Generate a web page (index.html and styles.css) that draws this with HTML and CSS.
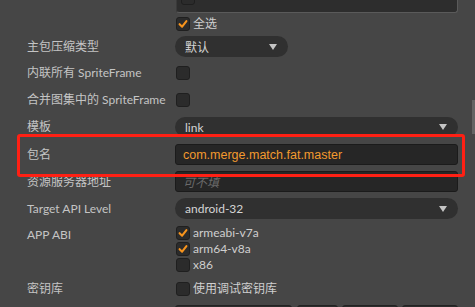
FILE: index.html
```html
<!DOCTYPE html>
<html lang="zh">
<head>
<meta charset="utf-8">
<title>构建发布</title>
<link rel="stylesheet" href="styles.css">
</head>
<body>
<div class="panel">
  <div class="form">
    <div class="lbl"></div>
    <div class="listbox">
      <span class="cb"></span>
      <span class="list-text">db://assets/Scene/Main.fire</span>
    </div>

    <div class="lbl"></div>
    <label class="check">
      <span class="cb"><svg viewBox="0 0 14 14"><polyline points="3,7.2 6,10.2 11,3.6"/></svg></span>
      <span>全选</span>
    </label>

    <div class="lbl">主包压缩类型</div>
    <div class="select select-short"><span>默认</span><svg class="arrow" viewBox="0 0 8 7"><polygon points="0,0 8,0 4,6"/></svg></div>

    <div class="lbl">内联所有 SpriteFrame</div>
    <label class="check"><span class="cb"></span></label>

    <div class="lbl">合并图集中的 SpriteFrame</div>
    <label class="check"><span class="cb"></span></label>

    <div class="lbl">模板</div>
    <div class="select select-thin"><span>link</span><svg class="arrow" viewBox="0 0 8 7"><polygon points="0,0 8,0 4,6"/></svg></div>

    <div class="lbl">包名</div>
    <div class="input"><span class="value">com.merge.match.fat.master</span></div>

    <div class="lbl">资源服务器地址</div>
    <div class="input"><span class="placeholder">可不填</span></div>

    <div class="lbl">Target API Level</div>
    <div class="select"><span>android-32</span><svg class="arrow" viewBox="0 0 8 7"><polygon points="0,0 8,0 4,6"/></svg></div>

    <div class="lbl lbl-top">APP ABI</div>
    <div class="checklist">
      <label class="check">
        <span class="cb"><svg viewBox="0 0 14 14"><polyline points="3,7.2 6,10.2 11,3.6"/></svg></span>
        <span>armeabi-v7a</span>
      </label>
      <label class="check">
        <span class="cb"><svg viewBox="0 0 14 14"><polyline points="3,7.2 6,10.2 11,3.6"/></svg></span>
        <span>arm64-v8a</span>
      </label>
      <label class="check">
        <span class="cb"></span>
        <span>x86</span>
      </label>
    </div>

    <div class="lbl">密钥库</div>
    <label class="check">
      <span class="cb"></span>
      <span>使用调试密钥库</span>
    </label>

    <div class="lbl"></div>
    <div class="btnrow">
      <span class="btn btn-a"></span>
      <span class="btn btn-b"></span>
      <span class="btn btn-c"></span>
      <span class="btn btn-c"></span>
    </div>
  </div>
  <div class="highlight"></div>
  <div class="scroll-thumb"></div>
</div>
</body>
</html>
```

FILE: styles.css
```css
* { box-sizing: border-box; }

html, body {
  margin: 0;
  padding: 0;
  background: #464646;
  overflow: hidden;
}

body {
  width: 475px;
  height: 307px;
  font-family: "Lato", "Noto Sans CJK SC", sans-serif;
  font-size: 12px;
  color: #c6c6c6;
}

.panel {
  position: relative;
  width: 475px;
  height: 307px;
  overflow: hidden;
}

.form {
  display: grid;
  grid-template-columns: 148px 283px;
  grid-template-rows: 24px 22px 23px 30px 24px 30px 25px 29px 25px 55px 26px 24px;
  margin-top: -11px;
  padding-left: 27px;
}

.lbl {
  align-self: center;
  line-height: 16px;
  color: #c4c4c4;
  white-space: nowrap;
}

.lbl-top {
  align-self: start;
  margin-top: 5px;
  line-height: 18px;
}

.listbox {
  margin-left: 1px;
  width: 282px;
  height: 24px;
  background: #2d2d2d;
  border: 1px solid #5a5a5a;
  border-top: none;
  border-left-color: #3a3a3a;
  border-radius: 0 0 3px 3px;
  display: flex;
  align-items: flex-end;
  gap: 5px;
  padding: 0 0 7px 4px;
}

.list-text {
  color: #8a8a8a;
  line-height: 12px;
  margin-bottom: 3px;
}

.check {
  display: flex;
  align-items: center;
  gap: 3px;
  margin-left: 1px;
  align-self: center;
  justify-self: start;
  color: #cfcfcf;
  line-height: 14px;
}

.checklist .check {
  align-self: flex-start;
}

.cb {
  flex: none;
  width: 14px;
  height: 14px;
  background: #2b2b2b;
  border: 1px solid #1f1f1f;
  border-radius: 3px;
  display: inline-flex;
}

.cb svg {
  width: 12px;
  height: 12px;
}

.cb polyline {
  fill: none;
  stroke: #f7941d;
  stroke-width: 2.4;
  stroke-linecap: round;
  stroke-linejoin: round;
}

.select {
  align-self: center;
  height: 21px;
  border-radius: 11px;
  background: #303030;
  display: flex;
  align-items: center;
  justify-content: space-between;
  padding: 0 11px 0 10px;
  color: #d4d4d4;
}

.select-thin { height: 20px; }

.select-short { width: 113px; }

.arrow {
  width: 8px;
  height: 7px;
  margin-top: 1px;
}

.arrow polygon { fill: #c4c4c4; }

.input {
  align-self: center;
  height: 21px;
  background: #262626;
  border: 1px solid #1b1b1b;
  border-radius: 3px;
  display: flex;
  align-items: center;
  padding-left: 7px;
}

.value {
  font-family: "Liberation Sans", "Noto Sans CJK SC", sans-serif;
  font-size: 12.5px;
  color: #f39a2e;
}

.placeholder {
  font-style: italic;
  color: #6a6a6a;
}

.checklist {
  display: flex;
  flex-direction: column;
  align-items: flex-start;
  gap: 2px;
  padding-top: 5px;
}

.btnrow {
  display: flex;
  gap: 4px;
  margin-top: 3px;
}

.btn {
  height: 20px;
  background: #2c2c2c;
  border: 1px solid #222;
  border-radius: 3px;
}

.btn-a { width: 117px; margin-right: 1px; }
.btn-b { width: 41px; }
.btn-c { width: 56px; }

.highlight {
  position: absolute;
  left: 17px;
  top: 134px;
  width: 448px;
  height: 43px;
  border: 3px solid #ff2014;
  border-radius: 3px;
}

.scroll-thumb {
  position: absolute;
  right: 0;
  top: 100px;
  width: 3px;
  height: 34px;
  background: #646464;
}
```
